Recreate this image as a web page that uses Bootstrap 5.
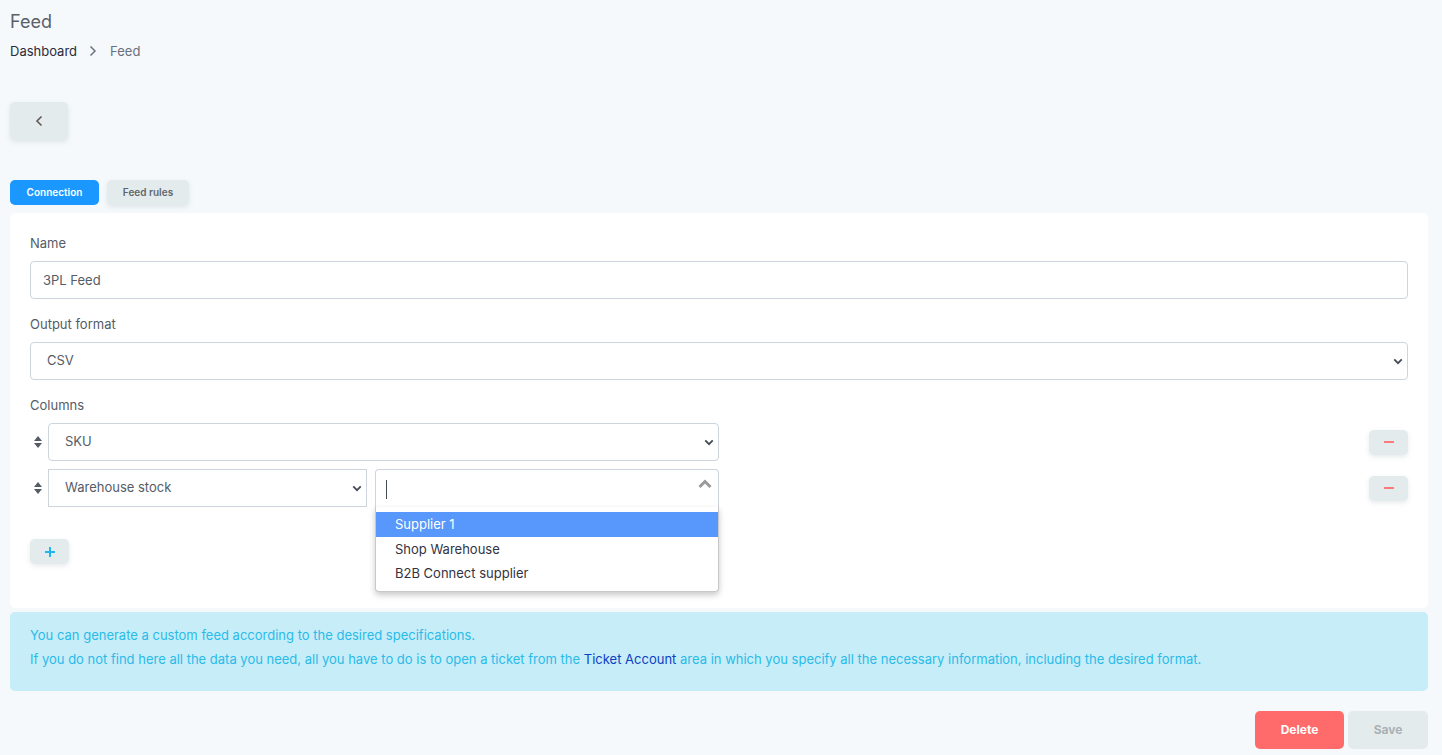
<!DOCTYPE html>
<html lang="en">
<head>
  <meta charset="UTF-8">
  <title>Feed</title>
  <meta name="viewport" content="width=device-width, initial-scale=1">
  <link href="https://cdn.jsdelivr.net/npm/bootstrap@5.3.3/dist/css/bootstrap.min.css" rel="stylesheet">
  <style>
    body {
      background: #f5f9fc;
      font-family: "Inter", "Liberation Sans", sans-serif;
      font-size: 13px;
      color: #555c66;
      height: 755px;
      overflow: hidden;
    }

    .page {
      padding: 11px 14px 0 10px;
    }

    .page-title {
      font-size: 18px;
      font-weight: 400;
      line-height: 21px;
      margin: 0 0 9px;
      color: #5a6068;
    }

    .crumbs {
      line-height: 20px;
      height: 20px;
      margin-bottom: 41px;
    }

    .crumbs .home { color: #2b2b3a; }
    .crumbs .here { color: #6b7080; }
    .crumbs svg { margin: 0 13px 0 12px; }

    .btn-soft {
      background: #e4ebed;
      border: none;
      border-radius: 5px;
      box-shadow: 0 2px 5px rgba(120, 140, 150, .18);
      padding: 0;
      display: flex;
      align-items: center;
      justify-content: center;
    }

    .btn-back { width: 58px; height: 38px; margin-bottom: 40px; }

    .tab {
      height: 25px;
      font-size: 10px;
      font-weight: 600;
      border-radius: 5px;
      border: none;
      padding: 0;
    }

    .tab-on { width: 89px; background: #1a98ff; color: #fff; }
    .tab-off { width: 82px; color: #5f666c; }

    .feed-card {
      background: #fff;
      border: none;
      border-radius: 5px;
      padding: 20px 20px 44px;
      margin-top: 8px;
    }

    .form-label {
      font-size: 13px;
      line-height: 20px;
      margin-bottom: 8px;
      color: #555c66;
    }

    .form-control, .form-select {
      height: 38px;
      font-size: 13px;
      color: #555c66;
      border: 1px solid #ced4de;
      border-radius: 4px;
      padding: 0 16px;
    }

    .form-control { padding-left: 12px; }

    .form-select {
      background-image: url("data:image/svg+xml,%3csvg xmlns='http://www.w3.org/2000/svg' viewBox='0 0 12 8'%3e%3cpath fill='none' stroke='%23444b55' stroke-width='2.2' d='M1.5 1.5 6 6l4.5-4.5'/%3e%3c/svg%3e");
      background-size: 10px 7px;
      background-position: right 4px center;
    }

    .square { border-radius: 0; }

    .mb-field { margin-bottom: 15px; }
    .col-row { height: 38px; margin-bottom: 8px; }
    .sort { width: 18px; flex: none; }
    .col-wide { width: 671px; flex: none; }
    .col-half { width: 319px; flex: none; }

    .picker {
      width: 344px;
      margin-left: 8px;
      position: relative;
      flex: none;
    }

    .picker-box {
      height: 38px;
      background: #fff;
      border: 1px solid #ced4de;
      border-bottom: none;
      border-radius: 4px 4px 0 0;
      padding: 0 10px;
      position: relative;
    }

    .caret-bar {
      width: 1px;
      height: 19px;
      background: #444b55;
      margin-top: 10px;
    }

    .picker-up { position: absolute; right: 6px; top: 9px; }

    .picker-menu {
      position: absolute;
      top: 38px;
      left: 0;
      right: 0;
      height: 85px;
      background: #fff;
      border-radius: 0 0 4px 4px;
      border: 1px solid #c8c8c8;
      border-top: none;
      box-shadow: 0 3px 6px rgba(0, 0, 0, .22);
      padding-top: 5px;
      z-index: 5;
    }

    .picker-menu div {
      padding-left: 19px;
      height: 24px;
      line-height: 24px;
      color: #33333f;
    }

    .picker-menu .sel {
      height: 25px;
      line-height: 25px;
      margin-bottom: 0;
      background: #5897fb;
      color: #fff;
    }

    .btn-sm-soft { width: 39px; height: 25px; }
    .btn-minus { margin-left: auto; }
    .btn-add { margin-top: 24px; }

    .note {
      background: #c6edf8;
      color: #2bbbe8;
      border: none;
      border-radius: 5px;
      margin: 4px 0 20px;
      padding: 11px 20px 0;
      height: 79px;
      line-height: 24px;
    }

    .note a { color: #0b3fc4; text-decoration: none; }

    .act {
      height: 38px;
      font-size: 12px;
      font-weight: 700;
      border: none;
      border-radius: 5px;
      padding: 0;
    }

    .act-del { width: 89px; background: #ff6b6b; color: #fff; }
    .act-save { width: 80px; color: #a9b1b5; box-shadow: none; }
  </style>
</head>
<body>
<div class="page">

  <!-- Heading -->
  <h1 class="page-title">Feed</h1>
  <div class="crumbs d-flex align-items-center">
    <span class="home">Dashboard</span>
    <svg width="8" height="12" viewBox="0 0 8 12"><path d="M1.5 1.5 6 6l-4.5 4.5" fill="none" stroke="#6b7480" stroke-width="1.5"/></svg>
    <span class="here">Feed</span>
  </div>

  <button class="btn btn-soft btn-back" aria-label="Back">
    <svg width="8" height="12" viewBox="0 0 8 12"><path d="M6.5 1.5 2 6l4.5 4.5" fill="none" stroke="#5f5a55" stroke-width="1.6"/></svg>
  </button>

  <!-- Tabs -->
  <div class="d-flex gap-2">
    <button class="btn tab tab-on">Connection</button>
    <button class="btn btn-soft tab tab-off">Feed rules</button>
  </div>

  <div class="card feed-card">
    <label class="form-label">Name</label>
    <input class="form-control mb-field" value="3PL Feed">

    <label class="form-label">Output format</label>
    <select class="form-select mb-field"><option>CSV</option></select>

    <label class="form-label">Columns</label>

    <div class="col-row d-flex align-items-center">
      <svg class="sort" width="18" height="12" viewBox="0 0 18 12" preserveAspectRatio="xMinYMid"><path d="M4 5h8L8 0zM4 7h8l-4 5z" fill="#555c66"/></svg>
      <select class="form-select col-wide"><option>SKU</option></select>
      <button class="btn btn-soft btn-sm-soft btn-minus" aria-label="Remove">
        <svg width="10" height="2" viewBox="0 0 10 2"><rect width="10" height="2" fill="#ff7b7b"/></svg>
      </button>
    </div>

    <div class="col-row d-flex align-items-center">
      <svg class="sort" width="18" height="12" viewBox="0 0 18 12" preserveAspectRatio="xMinYMid"><path d="M4 5h8L8 0zM4 7h8l-4 5z" fill="#555c66"/></svg>
      <select class="form-select col-half square"><option>Warehouse stock</option></select>
      <div class="picker">
        <div class="picker-box">
          <div class="caret-bar"></div>
          <svg class="picker-up" width="14" height="10" viewBox="0 0 14 10"><path d="M1.5 8 7 2.5 12.5 8" fill="none" stroke="#9a9a9a" stroke-width="3"/></svg>
        </div>
        <div class="picker-menu">
          <div class="sel">Supplier 1</div>
          <div>Shop Warehouse</div>
          <div>B2B Connect supplier</div>
        </div>
      </div>
      <button class="btn btn-soft btn-sm-soft btn-minus" aria-label="Remove">
        <svg width="10" height="2" viewBox="0 0 10 2"><rect width="10" height="2" fill="#ff7b7b"/></svg>
      </button>
    </div>

    <button class="btn btn-soft btn-sm-soft btn-add" aria-label="Add">
      <svg width="10" height="10" viewBox="0 0 10 10"><path d="M5 0v10M0 5h10" stroke="#1fb6f0" stroke-width="2"/></svg>
    </button>
  </div>

  <div class="alert note">
    You can generate a custom feed according to the desired specifications.<br>
    If you do not find here all the data you need, all you have to do is to open a ticket from the <a href="#">Ticket Account</a> area in which you specify all the necessary information, including the desired format.
  </div>

  <div class="d-flex justify-content-end gap-1">
    <button class="btn act act-del">Delete</button>
    <button class="btn btn-soft act act-save">Save</button>
  </div>

</div>
</body>
</html>
